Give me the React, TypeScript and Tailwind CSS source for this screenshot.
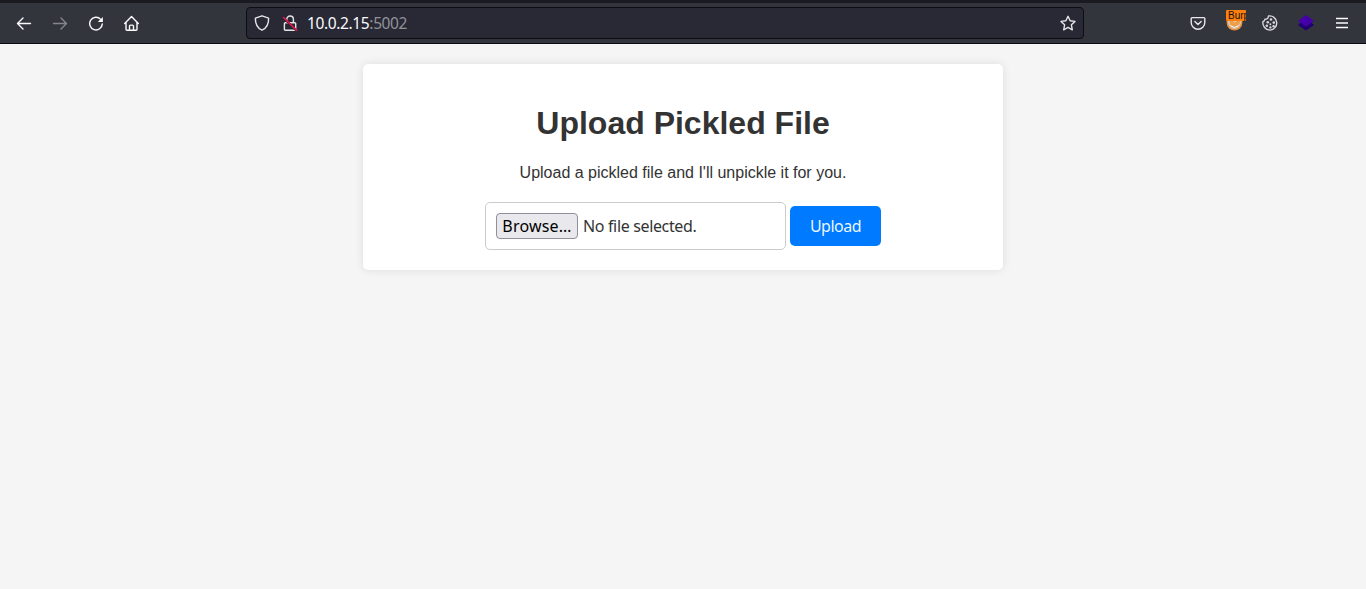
import type { ReactNode } from 'react';

function Icon({ children, className = '' }: { children: ReactNode; className?: string }) {
  return (
    <svg
      viewBox="0 0 16 16"
      className={`h-4 w-4 shrink-0 ${className}`}
      fill="none"
      stroke="currentColor"
      strokeWidth="1.4"
      strokeLinecap="round"
      strokeLinejoin="round"
    >
      {children}
    </svg>
  );
}

function NavButtons() {
  return (
    <div className="flex items-center gap-5 text-[#fbfbfe]">
      <Icon><path d="M14.5 8.5H1.7M7 3 1.5 8.5 7 14" /></Icon>
      <Icon className="text-[#85868c]"><path d="M1.5 8.5h12.8M9 3l5.5 5.5L9 14" /></Icon>
      <Icon>
        <path d="M12.7 4.4A6.3 6.3 0 1 0 14.3 8.9" />
        <path d="M14.9 2v5H9.8z" fill="currentColor" stroke="none" />
      </Icon>
      <Icon>
        <path d="M.7 8.5 7.5 1.5l6.8 7M2 7.5V14.3c0 .6.4 1 1 1h9c.6 0 1-.4 1-1V7.5" />
        <path d="M5.5 15.3v-4.2c0-.6.4-1 1-1h2c.6 0 1 .4 1 1v4.2" />
      </Icon>
    </div>
  );
}

function AddressBar() {
  return (
    <div className="ml-[106px] flex h-8 w-[838px] items-center rounded border border-[#0c0c13] bg-[#282934] px-[7px] text-[#e5e5e9]">
      <Icon><path d="M8 .8 14.6 3.2c.2 5.3-2 9.8-6.6 12-4.6-2.2-6.8-6.7-6.6-12z" /></Icon>
      <Icon className="ml-3">
        <path d="M4.8 7.7V4.3a3.3 3.3 0 0 1 6.6 0v3.4M3.3 7.7h9.5c.5 0 .9.4.9.9v5.8c0 .5-.4.9-.9.9H3.3c-.5 0-.9-.4-.9-.9V8.6c0-.5.4-.9.9-.9z" />
        <path d="m1.5 3 13 12.5" stroke="#282934" strokeWidth="2.4" />
        <path d="m1.5 2.5 13.2 12.9" stroke="#e9174b" strokeWidth="1.5" />
      </Icon>
      <span className="ml-[9px] font-['Noto_Sans',sans-serif] text-[15.5px] leading-5 tracking-[-0.37px] text-[#fbfbfe]">
        10.0.2.15<span className="text-[#91929b]">:5002</span>
      </span>
      <Icon className="ml-auto">
        <path d="m8 1.3 2.1 4.5 4.9.6-3.6 3.4.9 5L8 12.4l-4.3 2.4.9-5L1 6.4l4.9-.6z" />
      </Icon>
    </div>
  );
}

function ProxyIcon() {
  return (
    <div className="relative h-5 w-5">
      <svg viewBox="0 0 20 20" className="h-5 w-5">
        <circle cx="8.5" cy="9.5" r="8" fill="#e68b37" />
        <path d="M1.5 7h14c0 5-3 9-7 9s-7-4-7-9z" fill="#d8c6b1" />
        <path d="M3.5 8h4l1 2 2-2h4l-2 4.5-4 1.5-4-1.5z" fill="#ef9f4a" />
        <path d="m4.500 12.500 4 2 4-2" stroke="#eee" fill="none" />
      </svg>
      <div className="absolute left-0 top-[-3px] h-[11px] w-5 overflow-hidden rounded-[1px] bg-[#ff7f0e] pl-[2px] font-['Liberation_Sans',sans-serif] text-[10px] leading-[12px] text-[#16130f]">
        Burp
      </div>
    </div>
  );
}

function Toolbar() {
  return (
    <header className="flex h-11 items-center border-b border-[#0d0a17] border-t-[3px] border-t-[#1a1b20] bg-[#33353d] px-4">
      <NavButtons />
      <AddressBar />
      <div className="ml-auto flex items-center text-[#e9e9ec]">
        <Icon>
          <path d="M2.2 2.6h11.6c.6 0 1 .4 1 1v3.8a6.8 6.8 0 0 1-13.6 0V3.6c0-.6.4-1 1-1z" />
          <path d="M4.9 6.5 8 9.5l3.1-3" />
        </Icon>
        <div className="ml-5 mr-4"><ProxyIcon /></div>
        <Icon className="text-[#d6d6da]">
          <path d="M6.5 1c-.2 2.5-1.300 3.300-3.600 3.300C2.500 6 1.800 6.500.9 6.700.3 11 3.500 15.100 8 15.100A7.100 7.100 0 1 0 6.500 1z" />
          <g fill="currentColor" stroke="none">
            <circle cx="9" cy="4.5" r="1.300" /><circle cx="5.800" cy="7.300" r="1.300" />
            <circle cx="11.800" cy="7.600" r="1.300" /><circle cx="4.800" cy="10.700" r="1.300" />
            <circle cx="8.400" cy="9.200" r="1" /><circle cx="8.400" cy="12.400" r="1.200" /><circle cx="11.600" cy="11.200" r="1.200" />
          </g>
        </Icon>
        <svg viewBox="0 0 16 16" className="ml-5 h-4 w-4">
          <path d="m0 10 3-2.500h10l3 2.500-8 5.500z" fill="#210071" />
          <path d="m8 0 8 5.900-8 5.600-8-5.600z" fill="#4500aa" />
        </svg>
        <svg viewBox="0 0 16 16" className="ml-5 h-4 w-4" stroke="#fbfbfe" strokeWidth="1.3">
          <path d="M2 3.500h12M2 8h12M2 12.500h12" />
        </svg>
      </div>
    </header>
  );
}

export default function App() {
  return (
    <div className="flex h-screen flex-col overflow-hidden bg-[#f5f5f5] font-['Liberation_Sans',Arial,sans-serif] text-[#333]">
      <Toolbar />
      <main className="mx-auto mt-5 flex h-[206px] w-[640px] flex-col items-center rounded-[5px] bg-white pt-[41px] shadow-[0_0_10px_rgba(0,0,0,0.1)]">
        <h1 className="text-[32px] font-bold leading-9">Upload Pickled File</h1>
        <p className="mt-[23px] text-base leading-[18px]">Upload a pickled file and I&apos;ll unpickle it for you.</p>
        <form className="mt-5 flex items-center gap-1 font-['Noto_Sans',sans-serif] text-base leading-5" onSubmit={(e) => e.preventDefault()}>
          <div className="flex h-12 w-[301px] items-center gap-[5px] rounded-[5px] border border-[#ccc] pl-[10px]">
            <button type="button" className="flex h-[26px] w-[82px] items-center justify-center rounded border border-[#8f8f9d] bg-[#e9e9ed] tracking-[0.2px] text-black">
              Browse…
            </button>
            <span className="tracking-[-0.35px]">No file selected.</span>
          </div>
          <button type="submit" className="h-10 w-[91px] rounded-[5px] bg-[#007bff] tracking-[-0.5px] text-white/95">Upload</button>
        </form>
      </main>
    </div>
  );
}
